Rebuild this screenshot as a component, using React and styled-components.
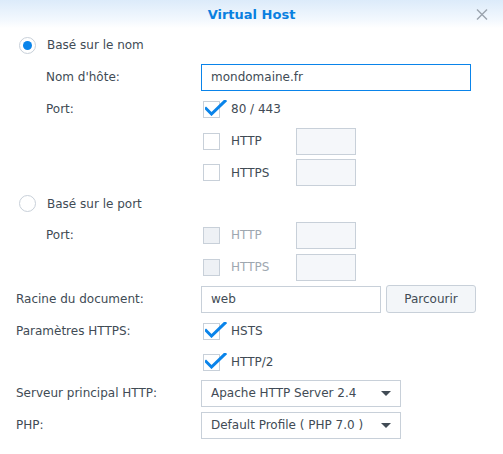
import React from "react";
import styled, { createGlobalStyle } from "styled-components";

const Global = createGlobalStyle`
  html, body { margin: 0; padding: 0; background: #fff; }
  body { font-family: "DejaVu Sans", Verdana, sans-serif; font-size: 12px; color: #414b55; }
  * { box-sizing: border-box; }
`;

const Dialog = styled.div`
  width: 503px;
  height: 454px;
  background: #fff;
  display: flex;
  flex-direction: column;
`;

const Header = styled.div`
  height: 28px;
  display: grid;
  grid-template-columns: 1fr auto 1fr;
  align-items: center;
  background: linear-gradient(to bottom, #dcebfa 0%, #f4f9fe 75%, #ffffff 100%);
`;

const Title = styled.div`
  grid-column: 2;
  font-weight: bold;
  font-size: 13px;
  color: #0a80e0;
`;

const Close = styled.div`
  grid-column: 3;
  justify-self: end;
  padding-right: 15px;
  display: flex;
  align-items: center;
`;

const Body = styled.div`
  padding: 3px 16px 0 16px;
  display: flex;
  flex-direction: column;
  gap: 4px;
`;

const Row = styled.div`
  height: ${(p) => p.$h || 28}px;
  display: grid;
  grid-template-columns: 185px 1fr;
  align-items: center;
`;

const RadioRow = styled.div`
  height: ${(p) => p.$h || 28}px;
  display: flex;
  align-items: center;
  gap: 11px;
  padding-left: 3px;
`;

const Label = styled.div`
  grid-column: 1;
  padding-left: ${(p) => (p.$indent ? 30 : 0)}px;
`;

const Control = styled.div`
  grid-column: 2;
  display: flex;
  align-items: center;
  gap: 5px;
`;

const RadioCircle = styled.span`
  width: 17px;
  height: 17px;
  border-radius: 50%;
  border: 1px solid #c8d0d9;
  background: #fff;
  display: flex;
  align-items: center;
  justify-content: center;
  &::after {
    content: "";
    display: ${(p) => (p.$on ? "block" : "none")};
    width: 9px;
    height: 9px;
    border-radius: 50%;
    background: #0a84ea;
  }
`;

const CheckCell = styled.div`
  width: 90px;
  display: flex;
  align-items: center;
  gap: 11px;
  padding-left: 2px;
  color: ${(p) => (p.$disabled ? "#9ea7b0" : "#414b55")};
`;

const Box = styled.span`
  position: relative;
  width: 17px;
  height: 17px;
  border: 1px solid #c8d0d9;
  background: ${(p) => (p.$disabled ? "#eef1f5" : "#fff")};
  flex: none;
`;

const Tick = styled.svg`
  position: absolute;
  left: 1px;
  top: -2px;
`;

const PortBox = styled.div`
  width: 60px;
  height: 27px;
  border: 1px solid #c8d0d9;
  background: #f5f7fa;
`;

const TextInput = styled.div`
  width: ${(p) => p.$w}px;
  height: 27px;
  border: 1px solid ${(p) => (p.$focus ? "#0a84ea" : "#c8d0d9")};
  display: flex;
  align-items: center;
  padding-left: 9px;
  color: #414b55;
`;

const Button = styled.div`
  width: 90px;
  height: 28px;
  border: 1px solid #c8d0d9;
  border-radius: 3px;
  background: #f3f6f9;
  display: flex;
  align-items: center;
  justify-content: center;
`;

const Select = styled.div`
  width: 200px;
  height: 27px;
  border: 1px solid #c8d0d9;
  display: flex;
  align-items: center;
  justify-content: space-between;
  padding: 0 9px 0 9px;
`;

const Caret = styled.span`
  width: 0;
  height: 0;
  border-left: 5px solid transparent;
  border-right: 5px solid transparent;
  border-top: 5px solid #414b55;
`;

function Check({ on, disabled, label }) {
  return (
    <CheckCell $disabled={disabled}>
      <Box $disabled={disabled}>
        {on && (
          <Tick width="22" height="16" viewBox="0 0 22 16">
            <path d="M1 8.5 L6.5 14 L20 1" fill="none" stroke="#0a84ea" strokeWidth="3" strokeLinecap="square" strokeLinejoin="miter" />
          </Tick>
        )}
      </Box>
      <span>{label}</span>
    </CheckCell>
  );
}

export default function App() {
  return (
    <>
      <Global />
      <Dialog>
        <Header>
          <Title>Virtual Host</Title>
          <Close>
            <svg width="12" height="11" viewBox="0 0 12 11">
              <path d="M1 0.5 L11 10.5 M11 0.5 L1 10.5" stroke="#9aa3ad" strokeWidth="1.4" fill="none" />
            </svg>
          </Close>
        </Header>
        <Body>
          <RadioRow>
            <RadioCircle $on />
            <span>Basé sur le nom</span>
          </RadioRow>
          <Row>
            <Label $indent>Nom d'hôte:</Label>
            <Control>
              <TextInput $w={270} $focus>mondomaine.fr</TextInput>
            </Control>
          </Row>
          <Row>
            <Label $indent>Port:</Label>
            <Control>
              <Check on label="80 / 443" />
            </Control>
          </Row>
          <Row>
            <Control>
              <Check label="HTTP" />
              <PortBox />
            </Control>
          </Row>
          <Row $h={27}>
            <Control>
              <Check label="HTTPS" />
              <PortBox />
            </Control>
          </Row>
          <RadioRow $h={27}>
            <RadioCircle />
            <span>Basé sur le port</span>
          </RadioRow>
          <Row>
            <Label $indent>Port:</Label>
            <Control>
              <Check disabled label="HTTP" />
              <PortBox />
            </Control>
          </Row>
          <Row>
            <Control>
              <Check disabled label="HTTPS" />
              <PortBox />
            </Control>
          </Row>
          <Row>
            <Label>Racine du document:</Label>
            <Control>
              <TextInput $w={180}>web</TextInput>
              <Button>Parcourir</Button>
            </Control>
          </Row>
          <Row>
            <Label>Paramètres HTTPS:</Label>
            <Control>
              <Check on label="HSTS" />
            </Control>
          </Row>
          <Row $h={26}>
            <Control>
              <Check on label="HTTP/2" />
            </Control>
          </Row>
          <Row>
            <Label>Serveur principal HTTP:</Label>
            <Control>
              <Select>
                <span>Apache HTTP Server 2.4</span>
                <Caret />
              </Select>
            </Control>
          </Row>
          <Row>
            <Label>PHP:</Label>
            <Control>
              <Select>
                <span>Default Profile ( PHP 7.0 )</span>
                <Caret />
              </Select>
            </Control>
          </Row>
        </Body>
      </Dialog>
    </>
  );
}
